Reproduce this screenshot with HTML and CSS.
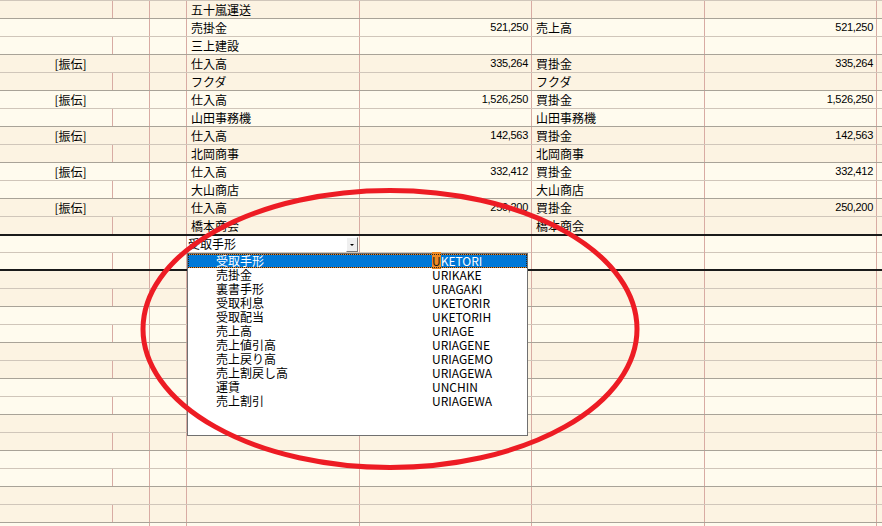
FILE: index.html
```html
<!DOCTYPE html>
<html lang="ja">
<head>
    <meta charset="UTF-8">
    <title>仕訳入力</title>
    <link rel="stylesheet" href="styles.css">
</head>
<body>
    <div class="sheet">
        <!-- previous entry (name row only) -->
        <div class="row sub dark">
            <div class="c"></div><div class="c"></div><div class="c"></div>
            <div class="c c-text">五十嵐運送</div><div class="c"></div>
            <div class="c c-text"></div><div class="c"></div><div class="c last"></div>
        </div>

        <div class="row top light">
            <div class="c c-memo"></div><div class="c"></div>
            <div class="c c-text">売掛金</div><div class="c c-num">521,250</div>
            <div class="c c-text">売上高</div><div class="c c-num">521,250</div><div class="c last"></div>
        </div>
        <div class="row sub light">
            <div class="c"></div><div class="c"></div><div class="c"></div>
            <div class="c c-text">三上建設</div><div class="c"></div>
            <div class="c c-text"></div><div class="c"></div><div class="c last"></div>
        </div>

        <div class="row top dark">
            <div class="c c-memo">[振伝]</div><div class="c"></div>
            <div class="c c-text">仕入高</div><div class="c c-num">335,264</div>
            <div class="c c-text">買掛金</div><div class="c c-num">335,264</div><div class="c last"></div>
        </div>
        <div class="row sub dark">
            <div class="c"></div><div class="c"></div><div class="c"></div>
            <div class="c c-text">フクダ</div><div class="c"></div>
            <div class="c c-text">フクダ</div><div class="c"></div><div class="c last"></div>
        </div>

        <div class="row top light">
            <div class="c c-memo">[振伝]</div><div class="c"></div>
            <div class="c c-text">仕入高</div><div class="c c-num">1,526,250</div>
            <div class="c c-text">買掛金</div><div class="c c-num">1,526,250</div><div class="c last"></div>
        </div>
        <div class="row sub light">
            <div class="c"></div><div class="c"></div><div class="c"></div>
            <div class="c c-text">山田事務機</div><div class="c"></div>
            <div class="c c-text">山田事務機</div><div class="c"></div><div class="c last"></div>
        </div>

        <div class="row top dark">
            <div class="c c-memo">[振伝]</div><div class="c"></div>
            <div class="c c-text">仕入高</div><div class="c c-num">142,563</div>
            <div class="c c-text">買掛金</div><div class="c c-num">142,563</div><div class="c last"></div>
        </div>
        <div class="row sub dark">
            <div class="c"></div><div class="c"></div><div class="c"></div>
            <div class="c c-text">北岡商事</div><div class="c"></div>
            <div class="c c-text">北岡商事</div><div class="c"></div><div class="c last"></div>
        </div>

        <div class="row top light">
            <div class="c c-memo">[振伝]</div><div class="c"></div>
            <div class="c c-text">仕入高</div><div class="c c-num">332,412</div>
            <div class="c c-text">買掛金</div><div class="c c-num">332,412</div><div class="c last"></div>
        </div>
        <div class="row sub light">
            <div class="c"></div><div class="c"></div><div class="c"></div>
            <div class="c c-text">大山商店</div><div class="c"></div>
            <div class="c c-text">大山商店</div><div class="c"></div><div class="c last"></div>
        </div>

        <div class="row top dark">
            <div class="c c-memo">[振伝]</div><div class="c"></div>
            <div class="c c-text">仕入高</div><div class="c c-num">250,200</div>
            <div class="c c-text">買掛金</div><div class="c c-num">250,200</div><div class="c last"></div>
        </div>
        <div class="row sub dark before-edit">
            <div class="c"></div><div class="c"></div><div class="c"></div>
            <div class="c c-text">橋本商会</div><div class="c"></div>
            <div class="c c-text">橋本商会</div><div class="c"></div><div class="c last"></div>
        </div>

        <!-- entry being edited -->
        <div class="row top light editing">
            <div class="c c-memo"></div><div class="c"></div>
            <div class="c c-edit">
                <div class="combo">
                    <span class="combo-value">受取手形</span>
                    <span class="combo-btn"></span>
                    <ul class="droplist">
                        <li class="selected"><span class="name">受取手形</span><span class="code"><b>U</b>KETORI</span></li>
                        <li><span class="name">売掛金</span><span class="code">URIKAKE</span></li>
                        <li><span class="name">裏書手形</span><span class="code">URAGAKI</span></li>
                        <li><span class="name">受取利息</span><span class="code">UKETORIR</span></li>
                        <li><span class="name">受取配当</span><span class="code">UKETORIH</span></li>
                        <li><span class="name">売上高</span><span class="code">URIAGE</span></li>
                        <li><span class="name">売上値引高</span><span class="code">URIAGENE</span></li>
                        <li><span class="name">売上戻り高</span><span class="code">URIAGEMO</span></li>
                        <li><span class="name">売上割戻し高</span><span class="code">URIAGEWA</span></li>
                        <li><span class="name">運賃</span><span class="code">UNCHIN</span></li>
                        <li><span class="name">売上割引</span><span class="code">URIAGEWA</span></li>
                    </ul>
                </div>
            </div>
            <div class="c c-num"></div>
            <div class="c c-text"></div><div class="c c-num"></div><div class="c last"></div>
        </div>
        <div class="row sub light editing-end">
            <div class="c"></div><div class="c"></div><div class="c"></div>
            <div class="c"></div><div class="c"></div>
            <div class="c"></div><div class="c"></div><div class="c last"></div>
        </div>

        <!-- empty lines -->
        <div class="row top dark"><div class="c c-memo"></div><div class="c"></div><div class="c"></div><div class="c"></div><div class="c"></div><div class="c"></div><div class="c last"></div></div>
        <div class="row sub dark"><div class="c"></div><div class="c"></div><div class="c"></div><div class="c"></div><div class="c"></div><div class="c"></div><div class="c"></div><div class="c last"></div></div>
        <div class="row top light"><div class="c c-memo"></div><div class="c"></div><div class="c"></div><div class="c"></div><div class="c"></div><div class="c"></div><div class="c last"></div></div>
        <div class="row sub light"><div class="c"></div><div class="c"></div><div class="c"></div><div class="c"></div><div class="c"></div><div class="c"></div><div class="c"></div><div class="c last"></div></div>
        <div class="row top dark"><div class="c c-memo"></div><div class="c"></div><div class="c"></div><div class="c"></div><div class="c"></div><div class="c"></div><div class="c last"></div></div>
        <div class="row sub dark"><div class="c"></div><div class="c"></div><div class="c"></div><div class="c"></div><div class="c"></div><div class="c"></div><div class="c"></div><div class="c last"></div></div>
        <div class="row top light"><div class="c c-memo"></div><div class="c"></div><div class="c"></div><div class="c"></div><div class="c"></div><div class="c"></div><div class="c last"></div></div>
        <div class="row sub light"><div class="c"></div><div class="c"></div><div class="c"></div><div class="c"></div><div class="c"></div><div class="c"></div><div class="c"></div><div class="c last"></div></div>
        <div class="row top dark"><div class="c c-memo"></div><div class="c"></div><div class="c"></div><div class="c"></div><div class="c"></div><div class="c"></div><div class="c last"></div></div>
        <div class="row sub dark"><div class="c"></div><div class="c"></div><div class="c"></div><div class="c"></div><div class="c"></div><div class="c"></div><div class="c"></div><div class="c last"></div></div>
        <div class="row top light"><div class="c c-memo"></div><div class="c"></div><div class="c"></div><div class="c"></div><div class="c"></div><div class="c"></div><div class="c last"></div></div>
        <div class="row sub light"><div class="c"></div><div class="c"></div><div class="c"></div><div class="c"></div><div class="c"></div><div class="c"></div><div class="c"></div><div class="c last"></div></div>
        <div class="row top dark"><div class="c c-memo"></div><div class="c"></div><div class="c"></div><div class="c"></div><div class="c"></div><div class="c"></div><div class="c last"></div></div>
        <div class="row sub dark"><div class="c"></div><div class="c"></div><div class="c"></div><div class="c"></div><div class="c"></div><div class="c"></div><div class="c"></div><div class="c last"></div></div>
        <div class="row top light"><div class="c c-memo"></div><div class="c"></div><div class="c"></div><div class="c"></div><div class="c"></div><div class="c"></div><div class="c last"></div></div>
    </div>

    <!-- red marker circle drawn over the screenshot -->
    <svg class="marker" width="882" height="526" viewBox="0 0 882 526">
        <ellipse cx="390" cy="329" rx="247" ry="138.5" fill="none" stroke="#ED1C24" stroke-width="5"/>
    </svg>
</body>
</html>
```

FILE: styles.css
```css
:root {
    --row-dark: #FCF3E2;
    --row-light: #FFFBEE;
    --line-pair: #A9A398;
    --line-inner: #D0C6BA;
    --line-col: #D8ABA3;
    --select-blue: #0078D7;
    --focus-orange: #F08A24;
}

* {
    margin: 0;
    padding: 0;
    box-sizing: border-box;
}

body {
    width: 882px;
    height: 526px;
    overflow: hidden;
    position: relative;
    background-color: var(--row-light);
    font-family: "Noto Sans CJK JP", sans-serif;
    font-size: 12px;
    color: #000;
}

.sheet {
    border-top: 1px solid var(--line-inner);
}

.row {
    display: grid;
    grid-template-columns: 113px 37px 37px 173px 172px 173px 172px 1fr;
    height: 18px;
}

.row.dark {
    background-color: var(--row-dark);
}

.row.light {
    background-color: var(--row-light);
}

.row.top {
    border-bottom: 1px solid var(--line-inner);
}

.row.sub {
    border-bottom: 1px solid var(--line-pair);
}

.row.before-edit {
    border-bottom-color: #1A1A1A;
}

.row.editing {
    border-top: 1px solid #1A1A1A;
}

.row.editing-end {
    border-bottom: 2px solid #1A1A1A;
}

.c {
    border-right: 1px solid var(--line-col);
    display: flex;
    align-items: center;
    white-space: nowrap;
    line-height: 17px;
    min-width: 0;
}

.c.last {
    border-right: none;
}

.c-memo {
    grid-column: 1 / 3;
    justify-content: center;
    padding-right: 8px;
}

.c-text {
    padding-left: 4px;
}

/* amounts use a narrow face like the original grid */
.c-num {
    justify-content: flex-end;
    padding-right: 3px;
    font-family: "Liberation Sans", sans-serif;
    font-size: 11px;
    letter-spacing: -0.3px;
}

/* combo editor inside the cell */
.c-edit {
    align-items: stretch;
    padding: 0 1px 1px 0;
}

.combo {
    position: relative;
    flex: 1;
    display: flex;
    background-color: #fff;
}

.combo-value {
    flex: 1;
    padding-left: 1px;
    line-height: 16px;
}

.combo-btn {
    width: 12px;
    margin-top: 1px;
    background-color: #EFEFEF;
    border-right: 1px solid #7A7A7A;
    border-bottom: 1px solid #7A7A7A;
    border-top: 1px solid #fff;
    border-left: 1px solid #fff;
    position: relative;
}

.combo-btn::after {
    content: "";
    position: absolute;
    left: 3px;
    top: 6px;
    border-left: 2px solid transparent;
    border-right: 2px solid transparent;
    border-top: 2px solid #000;
}

.droplist {
    list-style: none;
    position: absolute;
    top: 100%;
    left: 0;
    width: 341px;
    height: 183px;
    margin-top: 1px;
    background-color: #fff;
    border: 1px solid #707070;
    z-index: 10;
}

.droplist li {
    display: grid;
    grid-template-columns: 244px 1fr;
    height: 14px;
    line-height: 14px;
}

.droplist .name {
    padding-left: 28px;
}

.droplist li.selected {
    background-color: var(--select-blue);
    color: #fff;
    border-top: 1px solid var(--focus-orange);
    border-bottom: 1px solid var(--focus-orange);
    outline: 1px dotted #222;
    outline-offset: -1px;
    line-height: 12px;
}

.droplist .code b {
    font-weight: normal;
    background-color: var(--focus-orange);
    color: #1A1A1A;
}

.marker {
    position: absolute;
    top: 0;
    left: 0;
    pointer-events: none;
    z-index: 20;
}
```
